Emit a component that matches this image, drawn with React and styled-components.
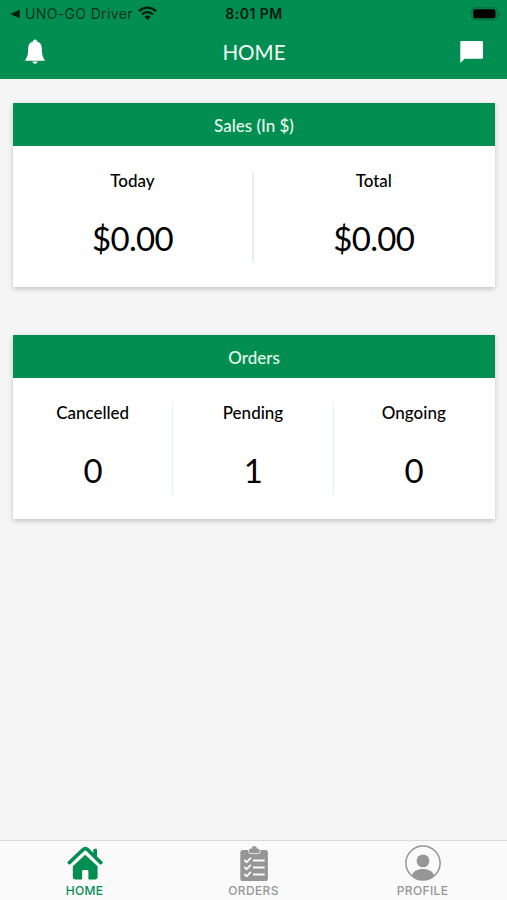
import React, { useState } from "react";
import styled, { createGlobalStyle } from "styled-components";

const GlobalStyle = createGlobalStyle`
  * {
    box-sizing: border-box;
  }
  body {
    margin: 0;
    background: #f5f5f5;
    font-family: Lato, sans-serif;
  }
`;

const Container = styled.div`
  height: 100vh;
  display: flex;
  flex-direction: column;
  background: #f5f5f5;
`;

const Header = styled.header`
  height: 79px;
  background: #028e50;
`;

const StatusBar = styled.div`
  height: 27px;
  padding: 0 6px 0 10px;
  display: grid;
  grid-template-columns: 1fr auto 1fr;
  align-items: center;
  font-family: Inter, sans-serif;
  font-size: 14px;
  color: #04351f;
`;

const BackToApp = styled.div`
  display: flex;
  align-items: center;
  letter-spacing: 0.35px;
  white-space: nowrap;
  svg:first-child {
    margin-right: 4px;
  }
  svg:last-child {
    margin: 0 0 2px 5px;
  }
`;

const Clock = styled.div`
  margin-right: 3px;
  font-weight: 600;
  letter-spacing: 0.5px;
  color: #021a10;
`;

const Battery = styled.div`
  display: flex;
  justify-content: flex-end;
`;

const NavBar = styled.div`
  height: 52px;
  padding: 0 23px 3px 24px;
  display: grid;
  grid-template-columns: 1fr auto 1fr;
  align-items: center;
  color: #f2fff8;
`;

const NavButton = styled.button`
  padding: 0;
  border: 0;
  background: none;
  display: flex;
  justify-self: ${({ $end }) => ($end ? "end" : "start")};
`;

const Title = styled.h1`
  margin: 0;
  font-size: 20.6px;
  line-height: 26px;
  font-weight: 400;
`;

const Content = styled.main`
  flex: 1;
  padding: 24.4px 12px 0 13px;
  display: flex;
  flex-direction: column;
  gap: 48.6px;
`;

const Card = styled.section`
  height: 183.4px;
  background: white;
  box-shadow: 0 2px 5px rgba(0, 0, 0, 0.2);
`;

const CardTitle = styled.h2`
  margin: 0;
  height: 43px;
  line-height: 46px;
  text-align: center;
  font-size: 17px;
  font-weight: 500;
  color: #e4fbee;
  background: #028e50;
`;

const Stats = styled.div`
  height: 140px;
  padding: 24.4px 1px 24px 0;
  display: grid;
  grid-auto-flow: column;
  grid-auto-columns: 1fr;
`;

const Stat = styled.div`
  display: flex;
  flex-direction: column;
  align-items: center;
  color: black;
  &:not(:last-child) {
    margin-right: ${({ $line }) => 0.5 - $line / 2}px;
    border-right: ${({ $line }) => $line}px solid #dff1fc;
  }
`;

const StatLabel = styled.div`
  font-size: 17px;
  line-height: 20px;
  font-weight: 500;
`;

const StatValue = styled.div`
  margin-top: 27px;
  font-size: 33px;
  line-height: 40px;
  letter-spacing: -0.7px;
`;

const TabBar = styled.nav`
  height: 60px;
  display: flex;
  background: #fafafa;
  border-top: 1px solid #dadada;
`;

const Tab = styled.button`
  flex: 1;
  padding: 3px 0 0;
  border: 0;
  background: none;
  display: flex;
  flex-direction: column;
  align-items: center;
  font-family: Inter, sans-serif;
  font-size: 12px;
  line-height: 14px;
  font-weight: 500;
  letter-spacing: 0.35px;
  color: ${({ $active }) => ($active ? "#028e50" : "#969696")};
  svg {
    margin-bottom: 2px;
  }
`;

const BackIcon = () => (
  <svg width="11" height="10" viewBox="0 0 11 10">
    <path d="M9.7 0.7V9.3L0.2 5z" fill="#021a10" />
  </svg>
);

const WifiIcon = () => (
  <svg width="19" height="14" viewBox="0 0 19 14">
    <g fill="none" stroke="#021a10" strokeWidth="2.4">
      <path d="M1 5.1a12.2 12.2 0 0 1 17 0" />
      <path d="M4.1 8.3a7.8 7.8 0 0 1 10.8 0" />
    </g>
    <path d="M9.5 14L6.4 10.8a4.6 4.6 0 0 1 6.2 0z" fill="#021a10" />
  </svg>
);

const BatteryIcon = () => (
  <svg width="30" height="14" viewBox="0 0 30 14">
    <rect x="0.8" y="0.8" width="25.4" height="12" rx="3.4" fill="none" stroke="#02683c" />
    <rect x="2.3" y="2.3" width="22.2" height="9" rx="1.8" fill="#000" />
    <path d="M27.6 4.8c1.8.7 1.8 3.3 0 4z" fill="#02683c" />
  </svg>
);

const BellIcon = () => (
  <svg width="22" height="26" viewBox="0 0 22 26">
    <path
      d="M11 0.5c-1.3 0-2 .9-2 2.1C5.6 3.5 4.3 6.2 4.2 9.5c-.1 5.5-.7 8.8-2.9 11.3v1h19.4v-1c-2.2-2.5-2.8-5.8-2.9-11.3-.1-3.3-1.4-6-4.8-6.9 0-1.2-.7-2.1-2-2.1z"
      fill="#fff"
    />
    <path d="M8.4 22.5h5.2c-.3 1.5-1.2 2.2-2.6 2.2s-2.3-.7-2.6-2.2z" fill="#fff" />
  </svg>
);

const ChatIcon = () => (
  <svg width="24" height="24" viewBox="0 0 24 24">
    <path
      d="M1.5 1h20.2a1.3 1.3 0 0 1 1.3 1.3v15.2a1.3 1.3 0 0 1-1.3 1.3H4.7L0.3 23V2.3A1.3 1.3 0 0 1 1.5 1z"
      fill="#fff"
    />
  </svg>
);

const HomeIcon = () => (
  <svg width="36" height="38" viewBox="0 0 36 38">
    <path
      d="M2.4 18.6L15.9 5.7q2.4-2.2 4.8 0L33.8 18.6"
      fill="none"
      stroke="currentColor"
      strokeWidth="3.6"
      strokeLinecap="round"
    />
    <path d="M26.3 5.9q0-1.2 1.2-1.2h1.3q1.2 0 1.2 1.2v7.5l-3.7-3.6z" fill="currentColor" />
    <path
      d="M18.2 10.8L30.6 22.2v10.9q0 2.3-2.3 2.3h-6.9v-8.1q0-1.4-1.4-1.4h-3.5q-1.4 0-1.4 1.4v8.1H8.1q-2.3 0-2.3-2.3V22.2z"
      fill="currentColor"
    />
  </svg>
);

const OrdersIcon = () => (
  <svg width="36" height="38" viewBox="0 0 36 38">
    <rect x="4.3" y="6" width="27.6" height="31" rx="2.6" fill="currentColor" />
    <path
      d="M14 4.7h1.4q.5-2.7 2.9-2.7t2.9 2.7h1.4q.9 0 .9.9v2.3q0 1-1 1h-8.4q-1 0-1-1V5.6q0-.9.9-.9z"
      fill="currentColor"
      stroke="#fafafa"
      strokeWidth="1.6"
      paintOrder="stroke"
    />
    <g fill="none" stroke="#fafafa" strokeWidth="1.8">
      <path d="M8.3 15.8l2.3 2.3 4.2-4.3M8.3 22.9l2.3 2.3 4.2-4.3M8.3 30l2.3 2.3 4.2-4.3" />
      <path d="M17 16.5h11.7M17 23.5h11.7M17 30.5h11.7" />
    </g>
  </svg>
);

const ProfileIcon = () => (
  <svg width="36" height="38" viewBox="0 0 36 38">
    <circle cx="18" cy="19" r="17.1" fill="none" stroke="currentColor" strokeWidth="1.5" />
    <circle cx="18" cy="16.9" r="6.4" fill="currentColor" />
    <path
      d="M6.9 31.6c1.3-4.3 5.3-6.5 11.1-6.5s9.8 2.2 11.1 6.5C26.1 34.6 22.3 36 18 36s-8.1-1.4-11.1-4.4z"
      fill="currentColor"
    />
  </svg>
);

const sales = [
  { label: "Today", value: "$0.00" },
  { label: "Total", value: "$0.00" },
];

const orders = [
  { label: "Cancelled", value: 0 },
  { label: "Pending", value: 1 },
  { label: "Ongoing", value: 0 },
];

const tabs = [
  { name: "HOME", Icon: HomeIcon },
  { name: "ORDERS", Icon: OrdersIcon },
  { name: "PROFILE", Icon: ProfileIcon },
];

const StatCard = ({ title, items, line }) => (
  <Card>
    <CardTitle>{title}</CardTitle>
    <Stats>
      {items.map((item) => (
        <Stat key={item.label} $line={line}>
          <StatLabel>{item.label}</StatLabel>
          <StatValue>{item.value}</StatValue>
        </Stat>
      ))}
    </Stats>
  </Card>
);

const App = () => {
  const [active, setActive] = useState("HOME");

  return (
    <Container>
      <GlobalStyle />
      <Header>
        <StatusBar>
          <BackToApp>
            <BackIcon />
            UNO-GO Driver
            <WifiIcon />
          </BackToApp>
          <Clock>8:01 PM</Clock>
          <Battery>
            <BatteryIcon />
          </Battery>
        </StatusBar>
        <NavBar>
          <NavButton aria-label="Notifications">
            <BellIcon />
          </NavButton>
          <Title>HOME</Title>
          <NavButton $end aria-label="Messages">
            <ChatIcon />
          </NavButton>
        </NavBar>
      </Header>
      <Content>
        <StatCard title="Sales (In $)" items={sales} line={2} />
        <StatCard title="Orders" items={orders} line={1} />
      </Content>
      <TabBar>
        {tabs.map(({ name, Icon }) => (
          <Tab
            key={name}
            $active={active === name}
            onClick={() => setActive(name)}
          >
            <Icon />
            {name}
          </Tab>
        ))}
      </TabBar>
    </Container>
  );
};

export default App;
